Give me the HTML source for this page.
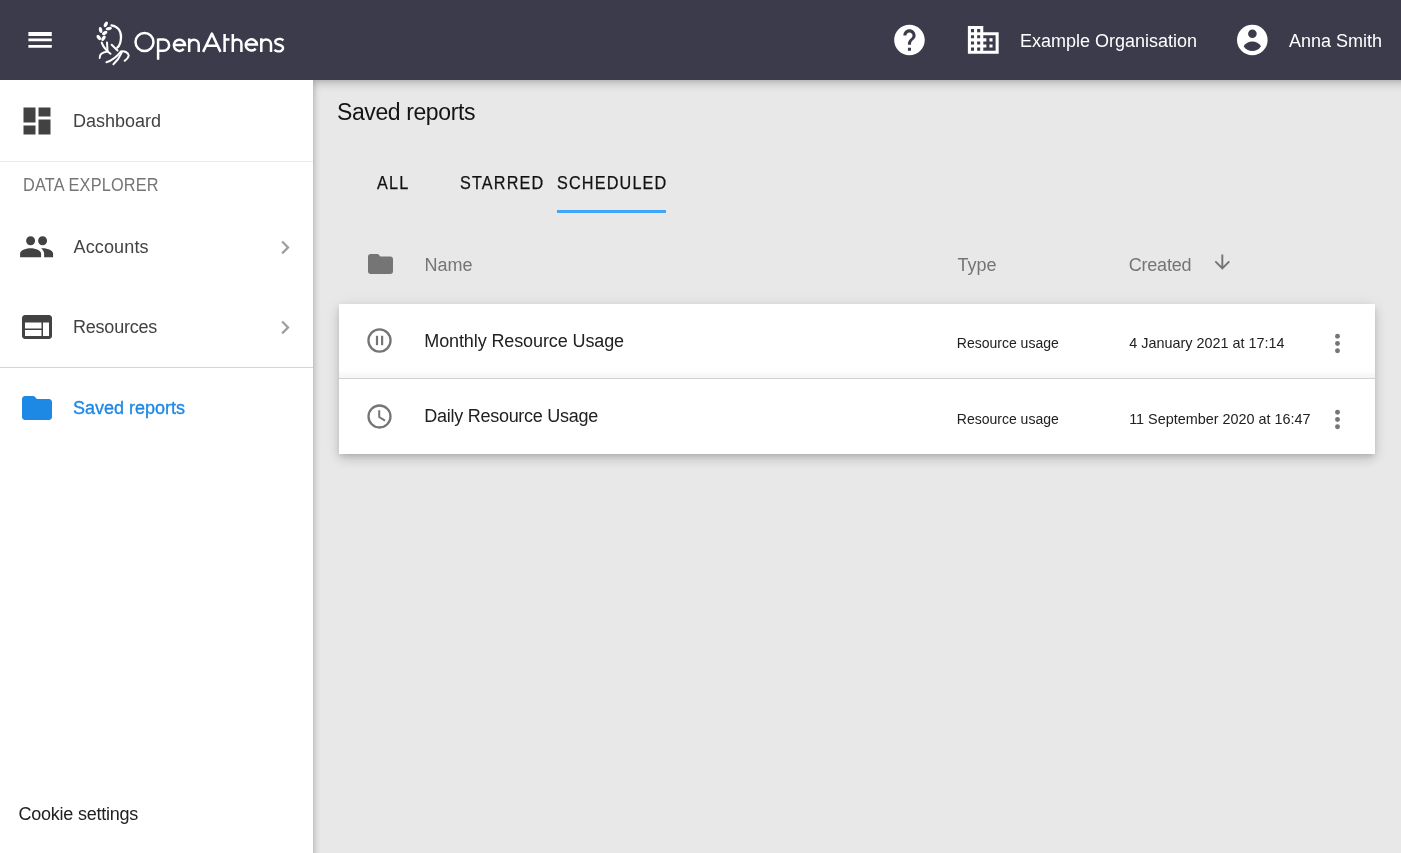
<!DOCTYPE html>
<html>
<head>
<meta charset="utf-8">
<style>
html,body{margin:0;padding:0;width:1401px;height:853px;overflow:hidden;background:#e8e8e8;font-family:"Liberation Sans",sans-serif;}
.abs{position:absolute;white-space:nowrap;line-height:30px;}
#header{position:absolute;left:0;top:0;width:1401px;height:80px;background:#3c3b4b;}
#side{position:absolute;left:0;top:80px;width:313px;height:773px;background:#fff;}
#main{position:absolute;left:313px;top:80px;width:1120px;height:810px;background:#e8e8e8;box-shadow:inset 0 4px 8px rgba(0,0,0,.19),inset 1px 0 5px rgba(0,0,0,.12);}
.hd{font-size:18px;color:#fff;}
.nav{font-size:18px;color:#424242;}
.tab{font-size:18px;color:#111;-webkit-text-stroke:0.25px #111;}
.th{font-size:18px;color:#757575;}
.rn{font-size:18px;color:#212121;}
.rs{font-size:14.4px;color:#212121;}
#card{position:absolute;left:339px;top:304px;width:1036px;height:150px;background:#fff;box-shadow:0 3px 5px -1px rgba(0,0,0,.12),0 6px 11px 0 rgba(0,0,0,.11),0 1px 14px 0 rgba(0,0,0,.08);}
</style>
</head>
<body><div id="wrap" style="position:absolute;left:0;top:0;width:1401px;height:853px;overflow:hidden;will-change:transform">
<div id="header"></div>
<div id="side"></div>
<div id="main"></div>
<div style="position:absolute;left:0;top:161px;width:313px;height:1px;background:#ebebeb"></div>
<div style="position:absolute;left:0;top:367px;width:313px;height:1px;background:#d4d4d4"></div>
<div id="card"></div>
<div style="position:absolute;left:339px;top:370px;width:1036px;height:8px;background:linear-gradient(rgba(0,0,0,0),rgba(0,0,0,0.045))"></div>
<div style="position:absolute;left:339px;top:378px;width:1036px;height:1px;background:#d2d2d2"></div>
<div style="position:absolute;left:557px;top:210px;width:109px;height:3px;background:#42a5f5"></div>

<!-- header text -->

<div class="abs hd" style="left:1020px;top:26px">Example Organisation</div>
<div class="abs hd" style="left:1289px;top:26px">Anna Smith</div>

<!-- sidebar text -->
<div class="abs nav" style="left:73px;top:106px">Dashboard</div>
<div class="abs" style="left:22.5px;top:170px;font-size:18px;color:#757575;letter-spacing:0.2px;transform:scaleX(0.905);transform-origin:0 0">DATA EXPLORER</div>
<div class="abs nav" style="left:73.5px;top:232px;letter-spacing:0.15px">Accounts</div>
<div class="abs nav" style="left:73px;top:312px;letter-spacing:-0.22px">Resources</div>
<div class="abs" style="left:73px;top:393px;font-size:18px;color:#1e88e5;-webkit-text-stroke:0.35px #1e88e5">Saved reports</div>
<div class="abs" style="left:18.6px;top:799px;font-size:18px;color:#212121;letter-spacing:-0.25px">Cookie settings</div>

<!-- main text -->
<div class="abs" style="left:337px;top:97px;font-size:23px;color:#141414;letter-spacing:-0.4px">Saved reports</div>
<div class="abs tab" style="left:377.3px;top:168px;letter-spacing:1.3px;transform:scaleX(0.9);transform-origin:0 0">ALL</div>
<div class="abs tab" style="left:459.7px;top:168px;letter-spacing:1.3px;transform:scaleX(0.9);transform-origin:0 0">STARRED</div>
<div class="abs tab" style="left:556.5px;top:168px;letter-spacing:1.3px;transform:scaleX(0.9);transform-origin:0 0">SCHEDULED</div>
<div class="abs th" style="left:424.4px;top:250px">Name</div>
<div class="abs th" style="left:957.4px;top:250px">Type</div>
<div class="abs th" style="left:1128.7px;top:250px;letter-spacing:-0.2px">Created</div>

<div class="abs rn" style="left:424.3px;top:326px;letter-spacing:-0.11px">Monthly Resource Usage</div>
<div class="abs rs" style="left:956.8px;top:328px;font-size:14px">Resource usage</div>
<div class="abs rs" style="left:1129.3px;top:328px">4 January 2021 at 17:14</div>
<div class="abs rn" style="left:424.3px;top:401px;letter-spacing:-0.27px">Daily Resource Usage</div>
<div class="abs rs" style="left:956.8px;top:404px;font-size:14px">Resource usage</div>
<div class="abs rs" style="left:1129.2px;top:404px">11 September 2020 at 16:47</div>

<svg style="position:absolute;left:0;top:0" width="1401" height="853" viewBox="0 0 1401 853">
 <!-- menu -->
 <g transform="translate(24.5,24.3) scale(1.3)" fill="#fff"><path d="M3 18h18v-2H3v2zm0-5h18v-2H3v2zm0-6v2h18V6H3z"/></g>
<!-- logo text --><title>OpenAthens</title>
 <g fill="none" stroke="#fff" stroke-width="2.5">
  <circle cx="144.5" cy="42.1" r="9"/>
  <path d="M158.1 38.6 V59.8 M158.1 39.6 H163.5 A5.6 5.6 0 0 1 163.5 50.8 H158.1"/>
  <path d="M173.9 44.9 H185 A5.6 5.6 0 1 0 183.7 48.9"/>
  <path d="M189.2 52 V38.4 M189.2 44.4 A4.75 4.75 0 0 1 198.7 44.4 V52"/>
  <path d="M203.1 51.9 L211.9 33.6 L220.5 51.9 M206.3 45.7 H217.3" stroke-linejoin="round"/>
  <path d="M224.6 34 V51.9 M223.4 39.6 H229.5"/>
  <path d="M232.8 34 V51.9 M232.8 43.75 A4.3 4.3 0 0 1 241.4 43.75 V51.9"/>
  <path d="M245.8 44.6 H256.9 A5.55 5.65 0 1 0 255.6 48.6"/>
  <path d="M261.3 51.9 V38.2 M261.3 44.3 A4.85 4.85 0 0 1 271 44.3 V51.9"/>
  <path d="M283.3 40.6 C282 38.9 279 38.6 277 39.4 C274.6 40.4 274.7 43.2 277.1 44.1 L281 45.5 C283.6 46.5 283.7 49.8 281.3 50.8 C279 51.8 275.8 51.4 274.6 49.6"/>
 </g>
 <!-- logo figure -->
 <g fill="none" stroke="#fff" stroke-width="2" stroke-linecap="round">
  <path d="M111.5 25.3 C117.5 26.3 121.2 31 121 37.3 C120.8 42.5 119.5 46 117.3 47.6" stroke-width="2.3"/>
  <path d="M111.7 44.7 L117.5 50.5"/>
  <path d="M101.7 42.6 C102.5 46 105 48.5 107 51 L110.5 53.8"/>
  <path d="M107 42.5 L107.5 50.5"/>
  <path d="M99.7 57.9 C99.5 55 101.5 52.5 107.6 51.6"/>
  <path d="M106.4 62.3 C112 60.5 117.5 56 121 51.4 C124 50.5 128.5 52.5 128.7 55.5 C128.5 57.5 126.5 59.5 124.6 60.8"/>
  <path d="M113.4 64.3 C117 61 120 56.5 121.7 52.6"/>
 </g>
 <g fill="#fff">
  <ellipse cx="105.8" cy="24.4" rx="3" ry="1.7" transform="rotate(-62 105.8 24.4)"/>
  <ellipse cx="108.8" cy="28.6" rx="3.1" ry="1.6" transform="rotate(-12 108.8 28.6)"/>
  <ellipse cx="100.6" cy="30" rx="3.1" ry="1.7" transform="rotate(80 100.6 30)"/>
  <ellipse cx="104.7" cy="33" rx="3" ry="1.7" transform="rotate(-32 104.7 33)"/>
  <ellipse cx="98.8" cy="37.6" rx="3" ry="1.7" transform="rotate(55 98.8 37.6)"/>
  <ellipse cx="103.5" cy="38.2" rx="3" ry="1.7" transform="rotate(-58 103.5 38.2)"/>
 </g>
 <!-- help -->
 <g transform="translate(891.1,21.7) scale(1.53)" fill="#fff"><path d="M12 2C6.48 2 2 6.48 2 12s4.48 10 10 10 10-4.48 10-10S17.52 2 12 2zm1 17h-2v-2h2v2zm2.07-7.75l-.9.92C13.45 12.9 13 13.5 13 15h-2v-.5c0-1.1.45-2.1 1.17-2.83l1.24-1.26c.37-.36.59-.86.59-1.41 0-1.1-.9-2-2-2s-2 .9-2 2H8c0-2.21 1.79-4 4-4s4 1.79 4 4c0 .88-.36 1.68-.93 2.25z"/></g>
 <!-- domain -->
 <g transform="translate(964.8,21.4) scale(1.54)" fill="#fff"><path d="M12 7V3H2v18h20V7H12zM6 19H4v-2h2v2zm0-4H4v-2h2v2zm0-4H4V9h2v2zm0-4H4V5h2v2zm4 12H8v-2h2v2zm0-4H8v-2h2v2zm0-4H8V9h2v2zm0-4H8V5h2v2zm10 12h-8v-2h2v-2h-2v-2h2v-2h-2V9h8v10zm-2-8h-2v2h2v-2zm0 4h-2v2h2v-2z"/></g>
 <!-- account -->
 <circle cx="1252.3" cy="40" r="15.3" fill="#fff"/>
 <circle cx="1252.4" cy="33.8" r="4.3" fill="#3c3b4b"/>
 <path d="M1243.6 46.3 A10.3 10.3 0 0 1 1261 46.3 A10.3 10.3 0 0 1 1243.6 46.3 Z" fill="#3c3b4b"/>

 <!-- sidebar icons -->
 <g transform="translate(19,103) scale(1.5)" fill="#424242"><path d="M3 13h8V3H3v10zm0 8h8v-6H3v6zm10 0h8V11h-8v10zm0-18v6h8V3h-8z"/></g>
 <g transform="translate(18.6,228.8) scale(1.5)" fill="#424242"><path d="M16 11c1.66 0 2.99-1.34 2.99-3S17.66 5 16 5c-1.66 0-3 1.34-3 3s1.34 3 3 3zm-8 0c1.66 0 2.99-1.34 2.99-3S9.66 5 8 5C6.34 5 5 6.34 5 8s1.34 3 3 3zm0 2c-2.33 0-7 1.17-7 3.5V19h14v-2.5c0-2.33-4.670-3.5-7-3.5zm8 0c-.29 0-.62.02-.97.05 1.16.84 1.97 1.97 1.970 3.45V19h6v-2.5c0-2.33-4.67-3.5-7-3.5z"/></g>
 <g transform="translate(19,309) scale(1.5)" fill="#424242"><path d="M20 4H4c-1.1 0-1.99.9-1.99 2L2 18c0 1.1.9 2 2 2h16c1.1 0 2-.9 2-2V6c0-1.1-.9-2-2-2zm-5 14H4v-4h11v4zm0-5H4V9h11v4zm5 5h-4V9h4v9z"/></g>
 <g transform="translate(19,390) scale(1.5)" fill="#1e88e5"><path d="M10 4H4c-1.1 0-1.99.9-1.99 2L2 18c0 1.1.9 2 2 2h16c1.1 0 2-.9 2-2V8c0-1.1-.9-2-2-2h-8l-2-2z"/></g>
 <g transform="translate(271.7,234) scale(1.12)" fill="#9e9e9e"><path d="M10 6L8.59 7.41 13.17 12l-4.58 4.59L10 18l6-6z"/></g>
 <g transform="translate(271.7,314) scale(1.12)" fill="#9e9e9e"><path d="M10 6L8.59 7.41 13.17 12l-4.58 4.59L10 18l6-6z"/></g>

 <!-- table header icons -->
 <g transform="translate(365.5,249) scale(1.25)" fill="#757575"><path d="M10 4H4c-1.1 0-1.99.9-1.99 2L2 18c0 1.1.9 2 2 2h16c1.1 0 2-.9 2-2V8c0-1.1-.9-2-2-2h-8l-2-2z"/></g>
 <g transform="translate(1210.8,250.6) scale(0.96)" fill="#757575"><path d="M20 12l-1.41-1.41L13 16.17V4h-2v12.17l-5.58-5.59L4 12l8 8 8-8z"/></g>

 <!-- row icons -->
 <circle cx="379.5" cy="340.5" r="11.05" fill="none" stroke="#757575" stroke-width="2.3"/>
 <rect x="375.9" y="335.8" width="2.2" height="9.4" fill="#757575"/>
 <rect x="381" y="335.8" width="2.2" height="9.4" fill="#757575"/>
 <circle cx="379.5" cy="416.5" r="11.0" fill="none" stroke="#757575" stroke-width="2.3"/>
 <path d="M379.2 410.3 V417 L385 420.6" fill="none" stroke="#757575" stroke-width="2"/>

 <g fill="#757575">
  <circle cx="1337.5" cy="336.3" r="2.45"/><circle cx="1337.5" cy="343.5" r="2.45"/><circle cx="1337.5" cy="350.7" r="2.45"/>
  <circle cx="1337.5" cy="412.3" r="2.45"/><circle cx="1337.5" cy="419.5" r="2.45"/><circle cx="1337.5" cy="426.7" r="2.45"/>
 </g>
</svg>
</div>
</body>
</html>
